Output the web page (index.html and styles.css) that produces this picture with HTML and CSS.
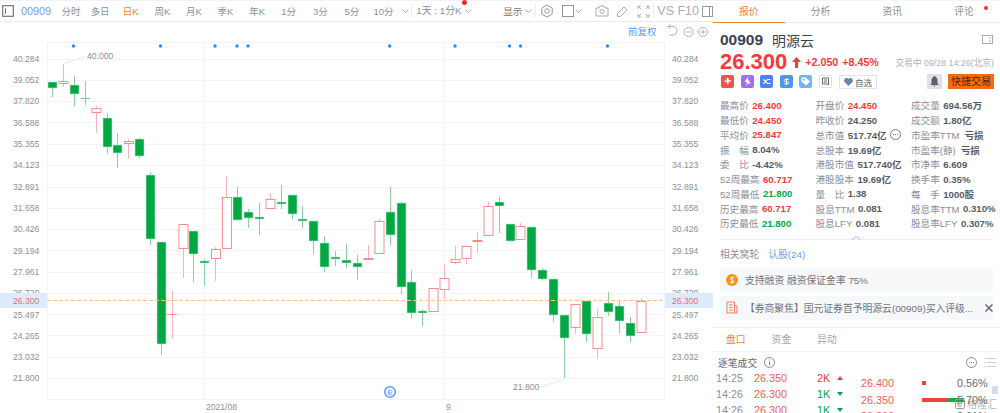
FILE: index.html
```html
<html>
  <head>
    <meta charset="utf-8">
    <title>00909 明源云</title>
    <link rel="stylesheet" href="styles.css">
  </head>
  <body>
    <div class="page">
      <div class="chart-pane">
        <div class="toolbar">
          <svg class="tool-box" width="12" height="12" viewBox="0 0 12 12"><rect x="0.7" y="0.7" width="10.6" height="10.6" fill="none" stroke="#777" stroke-width="1.2"/><path d="M3.5 3v6" stroke="#777"/></svg>
          <span class="tool-code">00909</span>
          <span class="tf tf-wide">分时</span>
          <span class="tf tf-wide">多日</span>
          <span class="tf active">日K</span>
          <span class="tf">周K</span>
          <span class="tf">月K</span>
          <span class="tf">季K</span>
          <span class="tf">年K</span>
          <span class="tf">1分</span>
          <span class="tf">3分</span>
          <span class="tf">5分</span>
          <span class="tf">10分</span>
          <svg class="chev chev-tf" width="7" height="4" viewBox="0 0 7 4"><path d="M.5.5l3 3 3-3"/></svg>
          <span class="tool-sep"></span>
          <span class="tool-range">1天 : 1分K<i class="red-dot"></i></span>
          <svg class="chev chev-range" width="7" height="4" viewBox="0 0 7 4"><path d="M.5.5l3 3 3-3"/></svg>
          <span class="tool-show">显示</span>
          <svg class="chev chev-range" width="7" height="4" viewBox="0 0 7 4"><path d="M.5.5l3 3 3-3"/></svg>
          <span class="tool-sep tool-sep-b"></span>
          <svg class="tool-gear" width="14" height="14" viewBox="0 0 14 14" fill="none" stroke="#999"><path d="M7 1l5.2 3v6L7 13 1.800 10V4z"/><circle cx="7" cy="7" r="2.300"/></svg>
          <svg class="tool-square" width="12" height="12" viewBox="0 0 12 12"><rect x="0.5" y="0.5" width="11" height="11" fill="none" stroke="#8a96a8"/></svg>
          <svg class="chev chev-square" width="7" height="4" viewBox="0 0 7 4"><path d="M.5.5l3 3 3-3"/></svg>
          <svg class="tool-camera" width="14" height="12" viewBox="0 0 14 12" fill="none" stroke="#aaa"><path d="M1 3h3l1-2h4l1 2h3v8H1z"/><circle cx="7" cy="6.500" r="2"/></svg>
          <svg class="tool-pen" width="13" height="13" viewBox="0 0 13 13" fill="none" stroke="#aaa"><path d="M1.500 8.500L8 2l3 3-6.500 6.500h-3z"/></svg>
          <svg class="tool-full" width="13" height="13" viewBox="0 0 13 13" fill="none" stroke="#aaa"><path d="M1 4V1h3M9 1h3v3M12 9v3H9M4 12H1V9M2 2l2 2M11 2L9 4M11 11L9 9M2 11l2-2"/></svg>
          <span class="tool-sep tool-sep-c"></span>
          <span class="tool-vs">VS F10</span>
          <svg class="tool-panel" width="11" height="11" viewBox="0 0 11 11" fill="none" stroke="#999"><rect x=".5" y=".5" width="10" height="10"/><path d="M7.500 1v9"/></svg>
        </div>
        <svg class="chart" width="713" height="391" viewBox="0 22 713 391">
          <g class="grid">
            <path d="M47.500 42.500H664.500V399.500H47.500Z" fill="none"/>
            <path d="M47 59.500H664M47 80.500H664M47 101.500H664M47 122.500H664M47 144.500H664M47 165.500H664M47 187.500H664M47 208.500H664M47 229.500H664M47 250.500H664M47 272.500H664M47 293.500H664M47 314.500H664M47 335.500H664M47 357.500H664M47 378.500H664"/>
            <path d="M204.500 42V399M444.500 42V399"/>
          </g>
          <text class="link-text" x="628" y="35">前复权</text>
          <g class="chart-tools">
            <path d="M669 35h5a4.500 4.500 0 0 0 0-8.500h-6M670.500 24l-2.500 2.500 2.500 2.500"/>
            <circle cx="688.500" cy="32" r="4.500"/><path d="M686 32h5"/>
            <circle cx="703" cy="32" r="4.500"/><path d="M700.500 32h5M703 29.500v5"/>
          </g>
          <g fill="#2a8cf5">
            <circle cx="73.500" cy="46" r="1.700"/><circle cx="160.500" cy="46" r="1.700"/><circle cx="215" cy="46" r="1.700"/><circle cx="237" cy="46" r="1.700"/><circle cx="248" cy="46" r="1.700"/><circle cx="389.700" cy="46" r="1.700"/><circle cx="455" cy="46" r="1.700"/><circle cx="509.500" cy="46" r="1.700"/><circle cx="520.500" cy="46" r="1.700"/><circle cx="607.500" cy="46" r="1.700"/>
          </g>
          <g class="axis">
            <text x="13" y="62">40.284</text><text x="13" y="83">39.052</text><text x="13" y="104">37.820</text><text x="13" y="126">36.588</text><text x="13" y="147">35.355</text><text x="13" y="168">34.123</text><text x="13" y="190">32.891</text><text x="13" y="211">31.658</text><text x="13" y="232">30.426</text><text x="13" y="254">29.194</text><text x="13" y="275">27.961</text><text x="13" y="296">26.720</text><text x="13" y="318">25.497</text><text x="13" y="339">24.265</text><text x="13" y="360">23.032</text><text x="13" y="381">21.800</text>
            <text x="672" y="62">40.284</text><text x="672" y="83">39.052</text><text x="672" y="104">37.820</text><text x="672" y="126">36.588</text><text x="672" y="147">35.355</text><text x="672" y="168">34.123</text><text x="672" y="190">32.891</text><text x="672" y="211">31.658</text><text x="672" y="232">30.426</text><text x="672" y="254">29.194</text><text x="672" y="275">27.961</text><text x="672" y="296">26.720</text><text x="672" y="318">25.497</text><text x="672" y="339">24.265</text><text x="672" y="360">23.032</text><text x="672" y="381">21.800</text>
            <text x="206" y="410">2021/08</text><text x="446" y="410">9</text>
            <text x="87" y="59">40.000</text><text x="513" y="390">21.800</text>
          </g>
          <rect class="last-bg" x="0" y="293" width="47" height="15"/>
          <rect class="last-bg" x="665" y="293" width="48" height="15"/>
          <path d="M64 63.500L86 56M539 388l25-9" stroke="#e8ebf0" fill="none"/>

          <g class="wick-g">
            <path d="M52.500 82V97M74.500 76V106M85.500 81V105M107.500 113V154M117.500 133V168M139.500 138V158M150.500 172V245M161.500 242V355M193.500 231V282M204.500 259V286M237.500 187V220M248.500 209V228M259.500 203V235M281.500 185V209M292.500 195V219M302.500 206V228M313.500 221V254M324.500 236V272M335.500 251V266M346.500 244V268M357.500 255V280M390.500 187V245M401.500 202V294M411.500 270V319M422.500 309V326M499.500 197V233M510.500 224V242M531.500 227V278M542.500 268V280M553.500 279V322M564.500 315V378M586.500 301V342M608.500 292V316M619.500 301V334M630.500 317V342"/>
          </g>
          <g class="wick-r">
            <path d="M63.500 64V87M96.500 106V133M128.500 139V159M172.500 291V339M183.500 249V278M215.500 247V281M226.500 176V197M270.500 193V199M368.500 245V260M379.500 219V221M444.500 265V299M455.500 246V264M466.500 259V264M477.500 232V253M488.500 202V206M520.500 223V226M575.500 328V334M597.500 309V359M641.500 298V301"/>
          </g>
          <g class="down">
            <rect x="48" y="82" width="9" height="6"/><rect x="70" y="85" width="9" height="9"/><rect x="81" y="98" width="9" height="1"/><rect x="103" y="118" width="9" height="29"/><rect x="113" y="145" width="9" height="8"/><rect x="135" y="139" width="9" height="17"/><rect x="146" y="175" width="9" height="64"/><rect x="157" y="242" width="9" height="102"/><rect x="189" y="231" width="9" height="23"/><rect x="200" y="261" width="9" height="2"/><rect x="233" y="197" width="9" height="23"/><rect x="244" y="212" width="9" height="6"/><rect x="255" y="217" width="9" height="2"/><rect x="277" y="202" width="9" height="2"/><rect x="288" y="195" width="9" height="19"/><rect x="298" y="219" width="9" height="2"/><rect x="309" y="221" width="9" height="20"/><rect x="320" y="243" width="9" height="24"/><rect x="331" y="257" width="9" height="2"/><rect x="342" y="260" width="9" height="3"/><rect x="353" y="263" width="9" height="4"/><rect x="386" y="212" width="9" height="23"/><rect x="397" y="203" width="9" height="84"/><rect x="407" y="282" width="9" height="31"/><rect x="418" y="311" width="9" height="2"/><rect x="495" y="202" width="9" height="4"/><rect x="506" y="224" width="9" height="17"/><rect x="527" y="227" width="9" height="43"/><rect x="538" y="270" width="9" height="9"/><rect x="549" y="279" width="9" height="36"/><rect x="560" y="315" width="9" height="23"/><rect x="582" y="301" width="9" height="33"/><rect x="604" y="303" width="9" height="9"/><rect x="615" y="306" width="9" height="15"/><rect x="626" y="323" width="9" height="13"/>
          </g>
          <g class="up">
            <rect x="59" y="81.500" width="9" height="2"/><rect x="92" y="108.500" width="9" height="4"/><rect x="124.500" y="141.500" width="9" height="2"/><rect x="179" y="224.500" width="9" height="24"/><rect x="211.500" y="249.500" width="9" height="9"/><rect x="222.500" y="197.500" width="9" height="51"/><rect x="266" y="199.500" width="9" height="9"/><rect x="364" y="258.500" width="9" height="1"/><rect x="375" y="221.500" width="9" height="32"/><rect x="429" y="288.500" width="9" height="23"/><rect x="440" y="278.500" width="9" height="11"/><rect x="451" y="259.500" width="9" height="3"/><rect x="462" y="246.500" width="9" height="12"/><rect x="473" y="240.500" width="9" height="1"/><rect x="484" y="206.500" width="9" height="29"/><rect x="516" y="226.500" width="9" height="13"/><rect x="571" y="304.500" width="9" height="23"/><rect x="593" y="317.500" width="9" height="31"/><rect x="637" y="301.500" width="9" height="31"/>
            <path d="M167 314.500H177"/>
          </g>
          <path class="last-line" d="M47 300.500H664"/>
          <text class="last-text" x="13" y="304">26.300</text>
          <text class="last-text" x="672" y="304">26.300</text>
          <circle cx="390" cy="392" r="5.300" fill="#eaf4ff" stroke="#5aa5f5" stroke-width="1.500"/>
          <text class="event-mark" x="387.700" y="394.600">E</text>
        </svg>
      </div>

      <div class="side">
        <div class="tabs">
          <span class="tab active">报价</span>
          <span class="tab">分析</span>
          <span class="tab">资讯</span>
          <span class="tab">评论<i class="red-dot tab-dot"></i></span>
        </div>
        <div class="quote">
          <div class="quote-name">
            <span class="code">00909</span>
            <span class="name">明源云</span>
            <svg class="panel-icon" width="11" height="9" viewBox="0 0 11 9" fill="none" stroke="#aab"><rect x=".5" y=".5" width="10" height="8"/><path d="M7 3h2M7 6h2"/></svg>
          </div>
          <div class="quote-price">
            <span class="price">26.300</span>
            <svg class="price-arrow" width="9" height="11" viewBox="0 0 9 11"><path d="M4.500 0L9 5H6v6H3V5H0z" fill="#f33b3b"/></svg>
            <span class="change">+2.050</span>
            <span class="change">+8.45%</span>
            <span class="status">交易中 09/28 14:26(北京)</span>
          </div>
          <div class="quote-actions">
            <svg class="badge" viewBox="0 0 13 13"><rect width="13" height="13" rx="2" fill="#f0524f"/><path d="M6.500 2.500c1.500.5 1.500 2 .8 3 1-.8 2.500-.6 3 .6-1 1-2.300.7-3 .2.700 1 .7 2.400-.5 3.200-1-.8-1-2-.5-3-.8.800-2.300 1-3.200 0 .5-1.200 2-1.300 3-.8-.8-.8-.8-2.400.4-3.200z" fill="#fff"/></svg>
            <svg class="badge" viewBox="0 0 13 13"><rect width="13" height="13" rx="2" fill="#a06ff0"/><path d="M7 2L3.500 7H6l-1 4 2-2.500h3L8 6.500l1-1H7.200z" fill="#fff"/></svg>
            <svg class="badge" viewBox="0 0 13 13"><rect width="13" height="13" rx="2" fill="#4a84f2"/><path d="M3 4.500c2 0 3 4 5 4h2.500M3 8.500c2 0 3-4 5-4h2.500" stroke="#fff" stroke-width="1.200" fill="none"/></svg>
            <svg class="badge" viewBox="0 0 13 13"><rect width="13" height="13" rx="2" fill="#4f95f5"/><path d="M8.800 4.500H5.500a1 1 0 0 0 0 2.200h2a1 1 0 0 1 0 2.200H4.300M6.500 3v7" stroke="#fff" fill="none"/></svg>
            <svg class="badge" viewBox="0 0 13 13"><rect width="13" height="13" rx="2" fill="#72b3f7"/><path d="M2.500 2.500h4.500l4 4-3.800 4-4.700-4z" fill="#fff"/><circle cx="4.800" cy="4.800" r="1" fill="#72b3f7"/></svg>
            <svg class="badge" viewBox="0 0 13 13"><rect x=".5" y=".5" width="12" height="12" rx="1" fill="#fff" stroke="#dde"/><path d="M3.500 3h6v7l-1-1h-5zM5 5h3M5 7h3" fill="none" stroke="#667"/></svg>
            <span class="watch-btn">
              <svg width="9" height="8" viewBox="0 0 9 8"><path d="M4.500 8L.5 4C-.5 2.500.5 0 2.500 0c1 0 1.600.5 2 1.200C4.900.5 5.500 0 6.500 0c2 0 3 2.500 2 4z" fill="#6b86a8"/></svg>
              自选
            </span>
            <span class="bell-btn">
              <svg width="9" height="11" viewBox="0 0 9 11"><path d="M4.500 0C6.500 1 7.500 2.500 7.500 5V7.500L9 9H0L1.500 7.500V5C1.500 2.500 2.500 1 4.500 0ZM3.500 9.500H5.500L4.500 11Z" fill="#5c6068"/></svg>
            </span>
            <span class="trade-btn">快捷交易</span>
          </div>
        </div>

        <div class="stats">
          <div class="stat"><span class="stat-label">最高价</span><span class="stat-value red">26.400</span></div>
          <div class="stat"><span class="stat-label">开盘价</span><span class="stat-value red">24.450</span></div>
          <div class="stat"><span class="stat-label">成交量</span><span class="stat-value">694.56万</span></div>
          <div class="stat"><span class="stat-label">最低价</span><span class="stat-value red">24.450</span></div>
          <div class="stat"><span class="stat-label">昨收价</span><span class="stat-value">24.250</span></div>
          <div class="stat"><span class="stat-label">成交额</span><span class="stat-value">1.80亿</span></div>
          <div class="stat"><span class="stat-label">平均价</span><span class="stat-value red">25.847</span></div>
          <div class="stat"><span class="stat-label">总市值</span><span class="stat-value">517.74亿</span><svg class="more-dots" width="11" height="11" viewBox="0 0 11 11"><circle cx="5.500" cy="5.500" r="5" fill="none" stroke="#778"/><path d="M3 5.500h1M5 5.500h1M7 5.500h1" stroke="#778"/></svg></div>
          <div class="stat"><span class="stat-label">市盈率TTM</span><span class="stat-value stat-gap">亏损</span></div>
          <div class="stat"><span class="stat-label">振　幅</span><span class="stat-value">8.04%</span></div>
          <div class="stat"><span class="stat-label">总股本</span><span class="stat-value">19.69亿</span></div>
          <div class="stat"><span class="stat-label">市盈率(静)</span><span class="stat-value stat-gap">亏损</span></div>
          <div class="stat"><span class="stat-label">委　比</span><span class="stat-value">-4.42%</span></div>
          <div class="stat"><span class="stat-label">港股市值</span><span class="stat-value">517.740亿</span></div>
          <div class="stat"><span class="stat-label">市净率</span><span class="stat-value">6.609</span></div>
          <div class="stat"><span class="stat-label">52周最高</span><span class="stat-value red">60.717</span></div>
          <div class="stat"><span class="stat-label">港股股本</span><span class="stat-value">19.69亿</span></div>
          <div class="stat"><span class="stat-label">换手率</span><span class="stat-value">0.35%</span></div>
          <div class="stat"><span class="stat-label">52周最低</span><span class="stat-value green">21.800</span></div>
          <div class="stat"><span class="stat-label">量　比</span><span class="stat-value">1.38</span></div>
          <div class="stat"><span class="stat-label">每　手</span><span class="stat-value">1000股</span></div>
          <div class="stat"><span class="stat-label">历史最高</span><span class="stat-value red">60.717</span></div>
          <div class="stat"><span class="stat-label">股息TTM</span><span class="stat-value">0.081</span></div>
          <div class="stat"><span class="stat-label">股息率TTM</span><span class="stat-value">0.310%</span></div>
          <div class="stat"><span class="stat-label">历史最低</span><span class="stat-value green">21.800</span></div>
          <div class="stat"><span class="stat-label">股息LFY</span><span class="stat-value">0.081</span></div>
          <div class="stat"><span class="stat-label">股息率LFY</span><span class="stat-value">0.307%</span></div>
          <svg class="stats-fold" width="9" height="4" viewBox="0 0 9 4"><path d="M.5 3.500l4-3 4 3"/></svg>
        </div>

        <div class="related">
          <span>相关窝轮</span>
          <span class="related-link">认股(24)</span>
        </div>
        <div class="notice">
          <svg width="12" height="12" viewBox="0 0 12 12"><circle cx="6" cy="6" r="6" fill="#f7931e"/><path d="M8 3.800C7.500 3.200 4.500 3 4.500 4.600S7.800 5.800 7.800 7.500 4.800 9 4 8.200M6 2.500v7" stroke="#fff" fill="none"/></svg>
          <span>支持融资 融资保证金率 75%</span>
        </div>
        <div class="notice">
          <svg width="12" height="13" viewBox="0 0 12 13" fill="none" stroke="#ee7b5c"><path d="M1 1h7.500v11H1zM8.500 5H11v7H8.500M3 4h3.500M3 6.500h3.500M3 9h3.500"/></svg>
          <span class="notice-text">【券商聚焦】国元证券首予明源云(00909)买入评级...</span>
          <svg class="notice-close" width="8" height="8" viewBox="0 0 8 8"><path d="M.5.5l7 7M7.500.5l-7 7" stroke="#667" stroke-width="1.500"/></svg>
        </div>

        <div class="subtabs">
          <span class="subtab active">盘口</span>
          <span class="subtab">资金</span>
          <span class="subtab">异动</span>
        </div>
        <div class="tape-head">
          <span class="tape-title">逐笔成交</span>
          <svg width="11" height="11" viewBox="0 0 11 11" fill="none" stroke="#889"><circle cx="5.500" cy="5.500" r="5"/><path d="M5.500 4.500V8.500M5.500 2.500v1"/></svg>
          <svg class="tape-more" width="11" height="11" viewBox="0 0 11 11" fill="none" stroke="#889"><circle cx="5.500" cy="5.500" r="5"/><path d="M3 5.500h1M5 5.500h1M7 5.500h1"/></svg>
          <svg width="12" height="11" viewBox="0 0 12 11" stroke="#ccd"><path d="M3 1.500h9M3 5.500h9M3 9.500h9M0 1.500h1.500M0 5.500h1.500M0 9.500h1.500"/></svg>
        </div>
        <div class="tape">
          <div class="ticks">
            <div class="tick"><span class="tick-time">14:25</span><span class="tick-price">26.350</span><span class="tick-vol red">2K</span><i class="tri tri-up"></i></div>
            <div class="tick"><span class="tick-time">14:26</span><span class="tick-price">26.300</span><span class="tick-vol green">1K</span><i class="tri tri-down"></i></div>
            <div class="tick"><span class="tick-time">14:26</span><span class="tick-price">26.300</span><span class="tick-vol green">1K</span><i class="tri tri-down"></i></div>
          </div>
          <div class="book">
            <div class="book-row"><span class="book-price">26.400</span><span class="book-bar"><i class="bar-red bar-small"></i></span><span class="book-pct">0.56%</span></div>
            <div class="book-row"><span class="book-price">26.350</span><span class="book-bar"><i class="bar-red"></i><i class="bar-green"></i></span><span class="book-pct">5.70%</span></div>
            <div class="book-row"><span class="book-price">26.300</span><span class="book-bar"></span><span class="book-pct">0.61%</span></div>
          </div>
          <span class="scroll-thumb"></span>
          <span class="watermark">
            <svg width="10" height="10" viewBox="0 0 10 10" fill="none" stroke="#999"><rect x=".5" y=".5" width="9" height="9" rx="1"/><path d="M3 3v4h4"/></svg>
            格隆汇
          </span>
        </div>
      </div>
    </div>
  </body>
</html>
```

FILE: styles.css
```css
html, body {
  margin: 0;
  padding: 0;
  height: 413px;
  overflow: hidden;
  background: #fff;
}
body {
  font-family: "Liberation Sans", "Noto Sans CJK SC", sans-serif;
  color: #555;
}
.page {
  display: flex;
  width: 1000px;
  height: 413px;
}
.chart-pane {
  width: 713px;
  flex: none;
  overflow: hidden;
}
.toolbar {
  display: flex;
  align-items: center;
  border-top: 1px solid #f1f3f7;
  border-bottom: 1px solid #e8ebf0;
  height: 20px;
  font-size: 9.5px;
  color: #8b8f99;
  white-space: nowrap;
}
.chart {
  display: block;
}
.tool-box {
  margin-left: 2px;
  flex: none;
}
.tool-code {
  margin-left: 7px;
  width: 39px;
  font-size: 10.800px;
  color: #6d9ef2;
}
.tf {
  width: 31.600px;
  text-align: center;
  flex: none;
}
.tf-wide {
  width: 30px;
  margin-left: -1px;
}
.tf.active {
  color: #f5822a;
}
.chev {
  flex: none;
  margin-left: 7px;
  fill: none;
  stroke: #aaa;
}
.chev-tf {
  margin-left: 3px;
}
.chev-range {
  margin-left: 3px;
}
.tool-sep {
  width: 1px;
  height: 14px;
  background: #eceef2;
  margin-left: 2px;
  flex: none;
}
.tool-range {
  position: relative;
  margin-left: 4px;
  width: 46px;
  font-size: 9.800px;
  line-height: 14px;
  flex: none;
}
.red-dot {
  position: absolute;
  width: 5px;
  height: 5px;
  border-radius: 50%;
  background: #f02c2c;
}
.tool-range .red-dot {
  top: -4px;
  right: -5px;
}
.tool-show {
  margin-left: 31px;
  color: #777;
}
.tool-sep-b {
  margin-left: 3px;
}
.tool-gear {
  margin-left: 4px;
  flex: none;
}
.tool-square {
  margin-left: 8px;
  flex: none;
}
.chev-square {
  margin-left: 1px;
}
.tool-camera {
  margin-left: 13px;
  flex: none;
}
.tool-pen {
  margin-left: 7px;
  flex: none;
}
.tool-full {
  margin-left: 8px;
  flex: none;
}
.tool-sep-c {
  margin-left: 3px;
}
.tool-vs {
  margin-left: 3px;
  font-size: 12.500px;
  color: #a9adb5;
}
.tool-panel {
  margin-left: 3px;
  flex: none;
}

.grid path {
  stroke: #f2f4f8;
}
.last-bg {
  fill: #dcecfc;
}
.link-text {
  font-size: 9.500px;
  fill: #5d9cf5;
}
.chart-tools path, .chart-tools circle {
  fill: none;
  stroke: #b0b3ba;
}
.axis text {
  font-size: 8.600px;
  fill: #8b8f99;
}
.wick-g path {
  stroke: #86d2a3;
  fill: none;
}
.wick-r path {
  stroke: #f9b5b5;
  fill: none;
}
.down rect {
  fill: #00a843;
  stroke: #bfe8cf;
  stroke-width: 0.6;
}
.up rect {
  fill: #fff;
  stroke: #f58f8f;
}
.up path {
  stroke: #f58f8f;
}
.last-line {
  stroke: #fbc493;
  stroke-dasharray: 4 2;
}
.last-text {
  font-size: 8.600px;
  fill: #ee6a6a;
}
.event-mark {
  font-size: 7px;
  fill: #3b8fee;
}

.side {
  width: 287px;
  flex: none;
  display: flex;
  flex-direction: column;
  border-top: 1px solid #f1f3f7;
  box-sizing: border-box;
}
.tabs {
  display: flex;
  height: 21px;
  border-bottom: 1px solid #e8ebf0;
  flex: none;
}
.tab {
  position: relative;
  width: 71.750px;
  text-align: center;
  font-size: 9.800px;
  line-height: 21px;
  color: #8b8f99;
  box-sizing: border-box;
}
.tab.active {
  color: #f5822a;
  border-bottom: 1px solid #f5822a;
  height: 22px;
}
.tab-dot {
  width: 4px;
  height: 4px;
  right: 12px;
  top: 5px;
}
.quote {
  padding: 9px 6px 0 7px;
  flex: none;
}
.quote-name {
  display: flex;
  align-items: center;
  height: 15px;
}
.code {
  font-size: 15.500px;
  font-weight: bold;
  color: #3b4250;
}
.name {
  font-size: 14px;
  color: #3b4250;
  margin-left: 9px;
}
.panel-icon {
  margin-left: auto;
  margin-right: 1px;
}
.quote-price {
  display: flex;
  align-items: center;
  height: 24px;
  margin-top: 3px;
}
.price {
  font-size: 22px;
  font-weight: bold;
  color: #f33b3b;
}
.price-arrow {
  margin-left: 5px;
}
.change {
  font-size: 10.700px;
  font-weight: bold;
  color: #f33b3b;
  margin-left: 4px;
}
.status {
  margin-left: auto;
  font-size: 8.800px;
  color: #adb0b7;
}
.quote-actions {
  display: flex;
  align-items: center;
  gap: 6.500px;
  height: 15px;
  padding-left: 1px;
}
.badge {
  width: 13px;
  height: 13px;
  flex: none;
}
.watch-btn {
  display: flex;
  align-items: center;
  justify-content: center;
  gap: 2px;
  width: 36px;
  height: 12px;
  border: 1px solid #dfe3ea;
  font-size: 8.500px;
  color: #5c6068;
  margin-left: 1px;
}
.bell-btn {
  display: flex;
  align-items: center;
  justify-content: center;
  width: 15px;
  height: 15px;
  background: #dfe1e6;
  margin-left: auto;
}
.trade-btn {
  width: 46px;
  height: 15px;
  line-height: 15px;
  text-align: center;
  background: #f76b0a;
  color: #4a2a10;
  font-size: 10px;
}
.stats {
  position: relative;
  display: grid;
  grid-template-columns: 95.500px 95.500px 1fr;
  grid-auto-rows: 14.750px;
  margin: 9px 7px 0 7px;
  padding-bottom: 8px;
  border-bottom: 1px solid #eceef2;
  flex: none;
  font-size: 9.600px;
}
.stats-fold {
  position: absolute;
  left: 132px;
  bottom: -1px;
  fill: none;
  stroke: #aeb4c0;
}
.stat {
  display: flex;
  align-items: center;
  white-space: nowrap;
}
.stat-label {
  color: #8b8f99;
}
.stat-value {
  margin-left: 3.500px;
  font-weight: bold;
  color: #555b66;
}
.stat-gap {
  margin-left: 5px;
}
.stat-value.red, .red {
  color: #f33b3b;
}
.stat-value.green, .green {
  color: #00a843;
}
.more-dots {
  margin-left: 3px;
}
.related {
  display: flex;
  gap: 9px;
  align-items: center;
  height: 28px;
  padding-left: 7px;
  font-size: 9.800px;
  color: #8b8f99;
  flex: none;
}
.related-link {
  color: #6d9ef2;
}
.notice {
  display: flex;
  align-items: center;
  gap: 7px;
  height: 24px;
  margin: 0 7px 4px 7px;
  padding-left: 6px;
  background: #f7f8fa;
  font-size: 9.800px;
  color: #70747c;
  border-radius: 2px;
  flex: none;
  white-space: nowrap;
}
.notice-text {
  width: 233px;
  overflow: hidden;
}
.notice-close {
  margin-left: 1px;
}
.subtabs {
  display: flex;
  gap: 26px;
  height: 23px;
  align-items: center;
  padding-left: 13px;
  margin-top: 3px;
  border-top: 1px solid #eceef2;
  border-bottom: 1px solid #f1f3f7;
  font-size: 9.800px;
  color: #a3a6ad;
  flex: none;
}
.subtab.active {
  color: #f5822a;
}
.tape-head {
  display: flex;
  align-items: center;
  gap: 7px;
  height: 22px;
  padding-left: 5px;
  font-size: 9.800px;
  color: #666a72;
  flex: none;
}
.tape-more {
  margin-left: auto;
}
.tape-head svg:last-child {
  margin-right: 4px;
}
.tape {
  position: relative;
  flex: 1;
  overflow: hidden;
  display: flex;
  min-height: 0;
}
.ticks {
  margin-top: -4px;
  width: 137px;
  flex: none;
  font-size: 10.800px;
}
.tick {
  display: flex;
  align-items: center;
  height: 16px;
  padding-left: 3px;
}
.tick-time {
  width: 38px;
  color: #8b8f99;
}
.tick-price {
  width: 63px;
  color: #f35b5b;
}
.tick-vol {
  width: 20px;
  font-weight: normal;
}
.tri {
  width: 0;
  height: 0;
  border-left: 3px solid transparent;
  border-right: 3px solid transparent;
}
.tri-up {
  border-bottom: 4px solid #f33b3b;
}
.tri-down {
  border-top: 4px solid #00a843;
}
.book {
  flex: 1;
  font-size: 10.800px;
  padding-top: 1px;
}
.book-row {
  display: flex;
  align-items: center;
  height: 16.500px;
}
.book-price {
  width: 61px;
  margin-left: 11px;
  color: #f35b5b;
}
.book-bar {
  display: flex;
  width: 42px;
  flex: none;
}
.bar-red {
  display: block;
  width: 25px;
  height: 4px;
  background: #f0433f;
}
.bar-small {
  width: 4px;
}
.bar-green {
  display: block;
  width: 17px;
  height: 4px;
  background: #1aa84a;
}
.book-pct {
  margin-left: -7px;
  width: 27px;
  color: #666a72;
  text-align: right;
}
.scroll-thumb {
  position: absolute;
  right: 2px;
  top: 12px;
  width: 6px;
  height: 8px;
  background: #d5dce8;
}
.watermark {
  position: absolute;
  right: 3px;
  bottom: 2px;
  display: flex;
  align-items: center;
  gap: 2px;
  font-size: 10px;
  color: rgba(120, 120, 120, 0.55);
}
```
